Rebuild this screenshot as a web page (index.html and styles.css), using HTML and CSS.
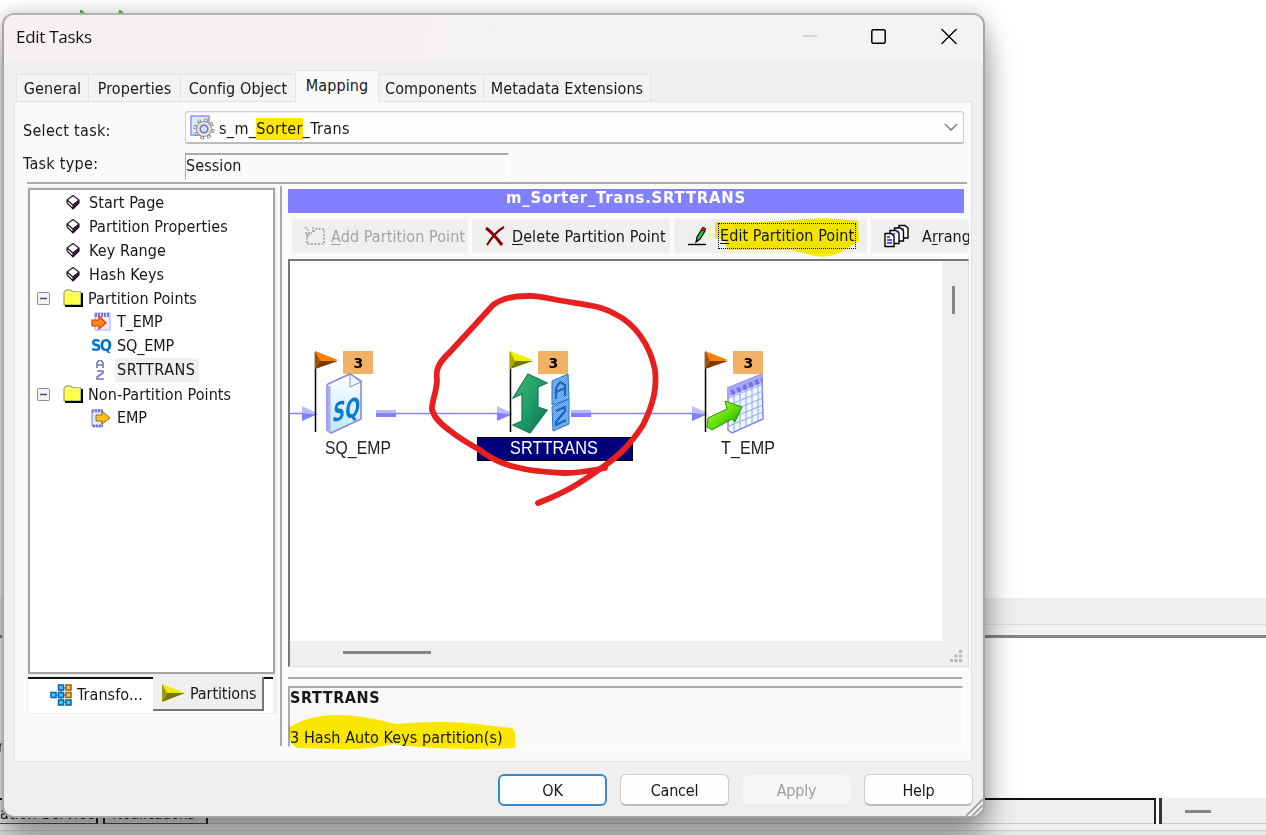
FILE: index.html
```html
<!DOCTYPE html>
<html lang="en">
<head>
<meta charset="utf-8">
<title>Edit Tasks</title>
<link rel="stylesheet" href="styles.css">
</head>
<body>
<svg width="0" height="0" class="defs">
  <defs>
    <g id="cube"><path d="M7 0.5 13 7 7 14 1 8Z" fill="#fff"/><path d="M7 10 13 5V8L7 14Z" fill="#5b1068"/><path d="M7 .5 1 5V8L7 14 13 8V5ZM1 5 7 10 13 5M7 10V14" fill="none" stroke="#111" stroke-width="1.1"/></g>
    <g id="folder"><path d="M1 3 3 1H8L10 3H18V16H1Z" fill="#ffff4a" stroke="#8d8d4b"/><path d="M19 4V17H2" fill="none" stroke="#000" stroke-width="2"/><path d="M2 4H17" stroke="#ffffc8"/></g>
    <g id="minus"><rect x=".5" y=".5" width="12" height="12" rx="1" fill="#f4f4f4" stroke="#8e8e8e"/><path d="M3 6.5H10" stroke="#30469b" stroke-width="1.5"/></g>
    <linearGradient id="paper" x2="0" y2="1"><stop offset="0" stop-color="#fff"/><stop offset="1" stop-color="#bfe8ff"/></linearGradient>
    <linearGradient id="lime" x2="1" y2="1"><stop offset="0" stop-color="#d6ff34"/><stop offset=".55" stop-color="#58dc0a"/><stop offset="1" stop-color="#187a08"/></linearGradient>
    <linearGradient id="teal" x2="1" y2="1"><stop offset="0" stop-color="#4fc66c"/><stop offset=".5" stop-color="#25a76c"/><stop offset="1" stop-color="#0b6d50"/></linearGradient>
    <pattern id="dots" width="2" height="2" patternUnits="userSpaceOnUse"><path d="M0 0H1V1H0ZM1 1H2V2H1Z" fill="#1767c5" opacity=".35"/></pattern>
    <pattern id="greendots" width="2" height="2" patternUnits="userSpaceOnUse"><path d="M0 0H1V1H0ZM1 1H2V2H1Z" fill="#05745e" opacity=".35"/></pattern>
  </defs>
</svg>

<div class="desktop">
  <div class="work"></div>
  <div class="band"></div>
  <div class="band-low"></div>
  <div class="output"><span class="clip">r</span></div>
  <div class="status"><div class="sheets"><span class="sheet one">ation Service</span><span class="sheet two">Notifications</span></div><div class="divider"></div><div class="scroll"><i></i></div></div>
  <div class="ground"><i></i></div>
</div>
<svg class="sprouts" width="50" height="6" viewBox="0 0 50 6"><path d="M0 5V0H2L7 5ZM38 5 39 0H41L46 5Z" fill="#5cb432"/></svg>

<div class="dialog">
  <header class="titlebar">
    <span class="caption">Edit Tasks</span>
    <svg class="winbtns" width="160" height="20" viewBox="0 0 160 20"><path d="M5 10H20" stroke="#b9bcbe"/><rect x="74.8" y="3.8" width="13.4" height="13.4" rx="1.5" fill="none" stroke="#000" stroke-width="1.5"/><path d="M145 3 160 18M160 3 145 18" stroke="#000" stroke-width="1.3" transform="translate(-.5 0)"/></svg>
  </header>

  <nav class="tabs">
    <span class="tab t1">General</span><span class="tab t2">Properties</span><span class="tab t3">Config Object</span><span class="tab on">Mapping</span><span class="tab t5">Components</span><span class="tab t6">Metadata Extensions</span>
  </nav>

  <main class="panel">
    <div class="row pick">
      <label>Select task:</label>
      <div class="combo">
        <svg width="25" height="25" viewBox="0 0 25 25"><rect x="1" y="1" width="18" height="19" fill="#d7eeff" stroke="#8c88f4" stroke-width="1.4"/><circle cx="14" cy="14" r="9" fill="none" stroke="#777" stroke-width="3" stroke-dasharray="3.6 3.47"/><circle cx="14" cy="14" r="9" fill="none" stroke="#e4e4e4" stroke-width="2" stroke-dasharray="2 5.07" stroke-dashoffset="-.8"/><circle cx="14" cy="14" r="7.5" fill="#e4e4e4" stroke="#969696"/><circle cx="14" cy="14" r="3.8" fill="#cbe2ff" stroke="#7775b4" stroke-width="1.5"/></svg>
        <span class="value">s_m_<mark>Sorter</mark>_Trans</span>
        <svg width="14" height="9" viewBox="0 0 14 9"><path d="M1 1 7 7 13 1" fill="none" stroke="#858585" stroke-width="1.6"/></svg>
      </div>
    </div>
    <div class="row type">
      <label>Task type:</label>
      <div class="field">Session</div>
    </div>

    <section class="split">
      <aside class="side">
        <ul class="tree">
          <li class="leaf"><svg width="14" height="15"><use href="#cube"/></svg><span>Start Page</span></li>
          <li class="leaf"><svg width="14" height="15"><use href="#cube"/></svg><span>Partition Properties</span></li>
          <li class="leaf"><svg width="14" height="15"><use href="#cube"/></svg><span>Key Range</span></li>
          <li class="leaf"><svg width="14" height="15"><use href="#cube"/></svg><span>Hash Keys</span></li>
          <li class="branch"><svg width="13" height="13"><use href="#minus"/></svg><svg class="fold" width="20" height="18"><use href="#folder"/></svg><span>Partition Points</span></li>
          <li class="sub"><svg width="20" height="20" viewBox="0 0 20 20"><rect x="4" y="1" width="15" height="17" fill="#e1efff" stroke="#aaa8f4"/><path d="M4 3H19" stroke="#7774e4" stroke-width="4" stroke-dasharray="2 1"/><path d="M1 8H8V4L15 11 8 17V14H1Z" fill="#ff8a15" stroke="#ed3210" stroke-width="1.2"/></svg><span>T_EMP</span></li>
          <li class="sub"><span class="sq-small">SQ</span><span>SQ_EMP</span></li>
          <li class="sub"><svg width="20" height="20" viewBox="0 0 20 20"><path d="M6 8V3L8 0H10L12 3V8M6 5H12M6 11H12V13L6 17V19H13" fill="none" stroke="#7473cf" stroke-width="1.6"/></svg><span class="picked">SRTTRANS</span></li>
          <li class="branch"><svg width="13" height="13"><use href="#minus"/></svg><svg class="fold" width="20" height="18"><use href="#folder"/></svg><span>Non-Partition Points</span></li>
          <li class="sub"><svg width="20" height="20" viewBox="0 0 20 20"><path d="M1 2H11V18H1Z" fill="#dceeff" stroke="#7774e4"/><path d="M1 3H12M2 18H12" stroke="#7774e4" stroke-width="3" stroke-dasharray="2 1"/><path d="M5 7H11V3L19 10 11 16V13H5Z" fill="#ffbf20" stroke="#9a6510"/></svg><span>EMP</span></li>
        </ul>
        <div class="sheettabs">
          <div class="stab"><svg width="22" height="22" viewBox="0 0 22 22"><path d="M5 11H17M11 4H18M11 18H18M11 3V19" stroke="#34475a"/><g fill="#38cfff" stroke="#1264b4" stroke-width="1.6"><rect x="1" y="8.500" width="5" height="5"/><rect x="8.500" y="1" width="5" height="5"/><rect x="8.500" y="8.500" width="5" height="5"/><rect x="8.500" y="16" width="5" height="5"/><rect x="16" y="16" width="5" height="5"/></g><g fill="#ffc83b" stroke="#9b6812" stroke-width="1.6"><rect x="16" y="1" width="5" height="5"/><rect x="16" y="8.500" width="5" height="5"/></g></svg><span>Transfo...</span></div>
          <div class="stab current"><svg width="23" height="18" viewBox="0 0 23 18"><path d="M0 0 23 9 0 18 5 9Z" fill="#e5ee00"/><path d="M0 18 5 9H23Z" fill="#777400"/><path d="M0 0V18L5 9Z" fill="#9c9b00"/></svg><span>Partitions</span></div>
        </div>
      </aside>

      <div class="main">
        <h1 class="mapname">m_Sorter_Trans.SRTTRANS</h1>
        <div class="tools">
          <div class="tool add"><svg width="22" height="20" viewBox="0 0 22 20"><path d="M3 8V18H20V3H12" fill="none" stroke="#999" stroke-width="1.5" stroke-dasharray="2 1.5"/><path d="M1 1 5 5M9 1V6M1 7H8M13 2 9 6M3 11 6 8" stroke="#999" stroke-width="1.3" stroke-dasharray="2 1"/></svg><span><u>A</u>dd Partition Point</span></div>
          <div class="tool del"><svg width="22" height="20" viewBox="0 0 22 20"><path d="M2 2Q9 7 18 19" fill="none" stroke="#850000" stroke-width="3"/><path d="M20 1Q11 6 3 19" fill="none" stroke="#850000" stroke-width="2.200"/></svg><span><u>D</u>elete Partition Point</span></div>
          <div class="tool edit"><svg width="20" height="20" viewBox="0 0 20 20"><path d="M0 18.500H18" stroke="#000" stroke-width="1.400"/><path d="M8 16 9 11 14 3 17 5 12 13Z" fill="#28d345" stroke="#000" stroke-width="1.200"/><path d="M13 4 15 1 18 3 16 5Z" fill="#c4272e" stroke="#500"/></svg><span class="focus"><u>E</u>dit Partition Point</span></div>
          <div class="tool arr"><svg width="26" height="24" viewBox="0 0 26 24"><g fill="#fff" stroke="#000" stroke-width="1.400"><path d="M15 1.500H21L24 4V14H15Z"/><path d="M10.500 4H16.500L19.500 7V17H10.500Z"/><path d="M6 6.500H12L15 9V19.500H6Z"/><path d="M1 9.500H7L10 12V22.500H1Z"/></g><path d="M3 13H6M3 16H8M3 19H8M8 10H11M12.500 7.500H15M17 5H20" stroke="#2020cf" stroke-width="1.400"/></svg><span>A<u>r</u>rang</span></div>
        </div>
        <div class="canvas">
          <svg class="flow" width="652" height="380" viewBox="290 261 652 380">
            <path d="M290 413.5H303M376 413.5H500M571 413.5H695" stroke="#8584fa" stroke-width="1.4"/>
            <g id="n1"><path d="M302 406 318 413.5H302Z" fill="#bdbcfc"/><path d="M302 421V413L318 414Z" fill="#8180ff"/><path d="M315.5 352V432" stroke="#000" stroke-width="1.5"/></g>
            <use href="#n1" x="195"/><use href="#n1" x="390"/>
            <g id="flag"><path d="M315 351 338 360 315 369Z" fill="#ff7f00"/><path d="M315 369 320 361H338Z" fill="#793a00"/><path d="M315 351 320 361 315 369Z" fill="#aa5100"/></g>
            <use href="#flag" x="390"/>
            <path d="M510 351 533 360 510 369Z" fill="#f0f000"/><path d="M510 369 515 361H533Z" fill="#777600"/><path d="M510 351 515 361 510 369Z" fill="#aeae00"/>
            <g fill="#f2b266"><rect x="343" y="351" width="30" height="23"/><rect x="538" y="351" width="30" height="23"/><rect x="733" y="351" width="30" height="23"/></g>
            <g class="count"><text x="358.500" y="367.500">3</text><text x="553.500" y="367.500">3</text><text x="748.500" y="367.500">3</text></g>
            <g fill="#bbb9ff"><rect x="376" y="410" width="20" height="4"/><rect x="571" y="410" width="20" height="4"/></g>
            <g fill="#8180ff"><rect x="376" y="413" width="20" height="4"/><rect x="571" y="413" width="20" height="4"/></g>
            <path d="M328 384 350 374 361 381V419L331 433 327 430V386Z" fill="url(#paper)" stroke="#8a88de" stroke-width="1.6"/><path d="M329 386V432" stroke="#aaa8ff" stroke-width="3"/><path d="M350 374V387L361 382Z" fill="#edf5ff" stroke="#8a88de"/>
            <text class="sq" transform="matrix(1 -.25 0 1 333 422)" textLength="27" lengthAdjust="spacingAndGlyphs">SQ</text>
            <path d="M513 398 528 374 547 383 538 387V407L547 410 530 433 513 425 522 421V394Z" fill="url(#teal)" stroke="#16805b" stroke-width="1.3"/>
            <path d="M513 398 528 374 547 383 538 387V407L547 410 530 433 513 425 522 421V394Z" fill="url(#greendots)"/>
            <g fill="#7dbdf7" stroke="#2b70cd"><path d="M552 381 568 374 569 399 552 405Z"/><path d="M552 407 569 399V424L553 431Z"/></g>
            <path d="M556 399V388L560 382 565 385V396M556 392 565 388M556 411 565 407V411L556 422V425L566 420" fill="none" stroke="#2564bd" stroke-width="2.2"/>
            <path d="M552 381 568 374 569 424 553 431Z" fill="url(#dots)"/>
            <path d="M728 388 762 374 763 419 732 433 728 430Z" fill="#e7faff" stroke="#8280dc" stroke-width="1.4"/><path d="M728 388 762 374V383L728 397Z" fill="#a9a7ff"/><path d="M734 390V431M740 388V429M746 385V426M752 383V424M758 380V421M729 398 763 384M729 405 763 391M729 412 763 398M729 419 763 405M729 426 763 412" stroke="#a9aaf2" stroke-width="1.2"/><path d="M731 393 762 380" stroke="#7573e4" stroke-width="5" stroke-dasharray="4 2.500"/>
            <path d="M708 418 727 409 725 401 742 407 735 422 732 419 712 430 707 427Z" fill="url(#lime)" stroke="#2b9210"/>
            <rect x="477.500" y="437.500" width="155" height="23" fill="#00007d" stroke="#000"/>
            <g class="name"><text x="325" y="454" textLength="66" lengthAdjust="spacingAndGlyphs">SQ_EMP</text><text x="510" y="454" class="lit" textLength="88" lengthAdjust="spacingAndGlyphs">SRTTRANS</text><text x="721" y="454" textLength="54" lengthAdjust="spacingAndGlyphs">T_EMP</text></g>
          </svg>
          <div class="vbar"><i></i></div>
          <div class="hbar"><i></i></div>
          <svg class="grip" width="26" height="25" viewBox="0 0 26 25"><g fill="#b8b8b8"><path d="M17 9h3v3h-3zM17 13.500h3v3h-3zM17 18h3v3h-3zM12.500 13.500h3v3h-3zM12.500 18h3v3h-3zM8 18h3v3H8z"/></g></svg>
        </div>
        <div class="rule"></div>
        <div class="detail"><b>SRTTRANS</b><span>3 Hash Auto Keys partition(s)</span></div>
      </div>
    </section>
  </main>

  <footer class="buttons">
    <button class="btn default">OK</button><button class="btn">Cancel</button><button class="btn off">Apply</button><button class="btn">Help</button>
  </footer>
  <svg class="resize" width="17" height="17" viewBox="0 0 17 17"><path d="M0 17 17 0M6 17 17 6M11 17 17 11" stroke="#999" stroke-width="1.600"/></svg>
</div>

<svg class="marker" width="1266" height="835" viewBox="0 0 1266 835"><path d="M715 222Q755 223 795 220 825 216 858 221L859 241Q847 249 837 254 822 260 804 253L790 250 728 250 723 239 715 238Z" fill="#fff400"/><path d="M289 727Q310 716 330 715 360 714 396 724 450 719 493 726L513 728 513 731 515 731V748Q440 751 393 744 370 750 340 749L297 748Q288 744 289 727Z" fill="#ffec00"/></svg>
<svg class="pen" width="1266" height="835" viewBox="0 0 1266 835"><path d="M605 468C585 472 578 473 565 473 545 472 530 471 520 468 505 465 492 460 480 450 471 445 462 440 453 433 442 425 435 419 432 410 431 403 437 391 437 380 436 372 436 365 450 352L473 327 493 305C502 298 513 296 527 296 539 295 549 299 563 301 580 304 600 305 615 314 634 323 650 344 655 370 657 387 654 403 643 425 630 445 619 456 600 469 583 481 569 491 538 503" fill="none" stroke="#e81f1f" stroke-width="5.800" stroke-linecap="round" stroke-linejoin="round"/></svg>
</body>
</html>
```
FILE: styles.css
```css
*{box-sizing:border-box}
body{margin:0;width:1266px;height:835px;overflow:hidden;position:relative;background:#fff;font-family:"DejaVu Sans Condensed","DejaVu Sans",sans-serif;font-stretch:condensed;font-size:16px;letter-spacing:.08px;color:#171717;white-space:nowrap}
svg{display:block;flex:none}
.defs{position:absolute}
u{text-decoration-thickness:1px;text-underline-offset:2px}
.desktop{height:835px;display:flex;flex-direction:column}
.work{height:598px}
.band{height:27px;background:#efefef;border-bottom:1px solid #ddd}
.band-low{height:13px;background:#f2f2f2;border-bottom:3px solid #858585}
.output{height:160px;display:flex;align-items:flex-end}
.clip{width:4px;direction:rtl;margin-bottom:42px;color:#456}
.status{height:26px;display:flex;background:#efefef;border-bottom:1px solid #ccc}
.sheets{width:1156px;border-top:2px solid #111;border-right:2px solid #222;height:26px;display:flex}
.sheet{height:24px;line-height:27px;border-bottom:1px solid #555;border-right:2px solid #222;padding-left:9px}
.one{width:98px;padding-left:0}
.two{width:105px;margin-left:5px;border-left:2px solid #222;padding-left:7px;letter-spacing:-.6px}
.divider{width:6px;border-right:3px solid #333;height:26px;background:#fff}
.scroll{padding:12px 0 0 23px}
.scroll i{display:block;width:26px;height:3px;background:#858585}
.ground{height:11px;background:#f2f2f2;padding-top:6px}
.ground i{display:block;height:5px;background:#e8e8e8;border-top:1px solid #ccc}
.sprouts{position:absolute;left:80px;top:10px}
.dialog{position:absolute;left:2px;top:13px;width:983px;height:805px;border:2px solid #a5a7a7;border-top-color:#b2b2b2;border-radius:12px;background:#efefef;box-shadow:0 26px 34px rgba(0,0,0,.36),0 0 20px rgba(0,0,0,.2);display:flex;flex-direction:column}
.titlebar{height:46px;border-radius:10px 10px 0 0;background:linear-gradient(100deg,#f6f1f0 0 42%,#f1f3f5 55%);display:flex;justify-content:space-between;align-items:flex-start;padding:11px 26px 0 12px}
.caption{font:17px/22px "Open Sans",sans-serif;letter-spacing:-.28px;color:#111}
.tabs{height:40px;display:flex;align-items:flex-end;padding-left:12px;position:relative}
.tab{height:28px;margin-bottom:-1px;border:1px solid #e3e3e3;border-left-width:0;background:#f3f3f3;text-align:center;line-height:27px}
.t1{width:73px;border-left-width:1px}.t2{width:92px}.t3{width:115px}.t5{width:105px}.t6{width:167px}
.tab.on{width:83px;height:32px;background:#fafafa;border-bottom:0;line-height:30px;z-index:1}
.panel{width:958px;height:661px;flex:none;margin-left:10px;border:1px solid #e3e3e3;background:#fafafa;padding-top:9px}
.row{display:flex}
label{width:162px;padding-left:8px;flex:none;letter-spacing:.3px}
.pick{height:42px}
.pick label{line-height:39px}
.combo{width:779px;height:33px;display:flex;flex:none;align-items:center;border:1px solid #cfcfcf;border-bottom:2px solid #bbb;border-radius:3px;background:#fefefe;padding:0 5px 0 4px;margin-left:8px;box-shadow:inset 0 1px #eee}
.value{flex:1;padding-left:4px;padding-top:3px;letter-spacing:.35px}
mark{background:#fde600;color:inherit;padding:1px 0 2px}
.type{height:29px}
.type label{line-height:22px}
.field{width:324px;height:27px;flex:none;border:1px solid #fff;border-top:2px solid #aaa;border-left:1px solid #aaa;line-height:22px;margin-left:8px}
.split{width:940px;margin-left:12px;height:563px;border-top:2px solid #aaa;padding-top:4px;display:flex}
.side{width:250px;height:528px;margin-top:-2px;padding-top:2px;background:#efefef;padding-left:1px;flex:none}
.tree{height:486px;width:247px;border:2px solid #a4a4a4;background:#fff;margin:0;padding:0;list-style:none}
.tree li{height:24px;display:flex;align-items:center}
.leaf{padding-left:36px}.leaf span{margin-left:9px}
.branch{padding-left:7px}.fold{margin-left:13px;margin-right:5px}
.sub{padding-left:61px;letter-spacing:-.15px}.sub span{margin-left:4px;padding:0 2px;line-height:24px}
.sub .picked{background:#efefef;padding-right:4px;letter-spacing:.5px}
.sub .sq-small{font:bold 16px/22px "DejaVu Sans Condensed","DejaVu Sans",sans-serif;color:#0571cf;width:20px;margin:0;padding:0;letter-spacing:-1.700px}
.sheettabs{height:36px;width:245px;margin:3px 0 0;background:#fff;display:flex;border-top:2px solid #111}
.stab{width:125px;display:flex;align-items:center;padding:0 0 3px 22px;flex:none}
.stab span{margin-left:5px}
.current{width:111px;height:34px;margin-top:-2px;background:#efefef;border-right:2px solid #777;border-bottom:2px solid #777;padding:0 0 0 9px;letter-spacing:-.1px}
.main{width:686px;height:560px;margin-left:3px;border-left:2px solid #aaa;padding-left:6px;margin-top:-2px;padding-top:3px;flex:none}
.mapname{margin:0;width:676px;height:24px;background:#8180ff;color:#fff;text-align:center;font:bold 16.500px/18px "DejaVu Sans Condensed","DejaVu Sans",sans-serif;letter-spacing:.8px}
.tools{height:46px;padding:6px 0 0 4px;display:flex;gap:4px;width:681px;overflow:hidden}
.tool{height:34px;background:#efefef;display:flex;align-items:center;flex:none}
.add{width:176px;padding-left:12px;color:#a3a3a3}.add span{margin-left:5px}
.del{width:198px;padding-left:12px}.del span{margin-left:6px}
.edit{width:193px;padding-left:14px}.edit span{margin-left:12px;outline:1px dotted #000;outline-offset:1px;line-height:22px}
.arr{width:98px;padding-left:13px}.arr span{margin-left:12px}
.canvas{width:681px;height:408px;border:1px solid #ddd;border-top:2px solid #777;border-left:2px solid #777;background:#efefef;display:grid;grid-template:380px 25px / 652px 26px}
.flow{background:#fff}
.vbar{padding:25px 0 0 10px}.vbar i{display:block;width:3px;height:28px;background:#858585}
.hbar{padding:10px 0 0 53px}.hbar i{display:block;width:88px;height:3px;background:#858585}
.count{font:bold 14px "DejaVu Sans",sans-serif;text-anchor:middle}
.name{font:18px "Liberation Sans",sans-serif;fill:#222}
.lit{fill:#fff}
.sq{font:italic bold 26px "DejaVu Sans Condensed","DejaVu Sans",sans-serif;fill:#087bd1}
.rule{height:2px;width:674px;background:#aaa;margin-top:10px}
.detail{width:675px;height:61px;margin-top:7px;border:1px solid #fff;border-top:2px solid #aaa;border-left:2px solid #aaa;background:#f8f8f8;display:flex;flex-direction:column;line-height:20px}
.detail b{font-size:16px;letter-spacing:.6px}.detail span{margin-top:20px}
.buttons{display:flex;gap:13px;justify-content:flex-end;padding:12px 10px 0 0}
.btn{width:109px;height:32px;border:1px solid #ccc;border-bottom:2px solid #bbb;border-radius:6px;background:#fefefe;font:inherit;letter-spacing:-.2px;color:#171717;padding:1px 0 0}
.default{border:2px solid #3589ce}
.off{color:#9d9d9d;border-color:#eee;background:#f7f7f7}
.resize{position:absolute;right:0;bottom:0;border-bottom-right-radius:10px}
.marker,.pen{position:absolute;left:0;top:0;pointer-events:none}
.marker{mix-blend-mode:multiply}
```
